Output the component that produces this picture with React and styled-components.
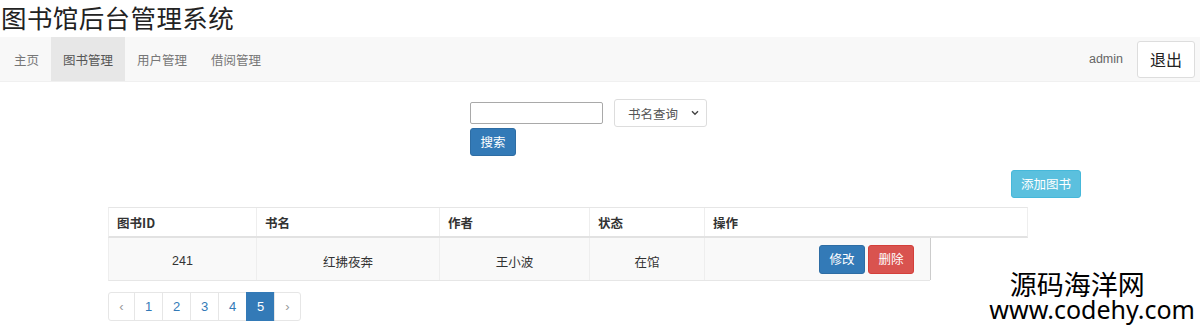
import React from "react";
import styled, { createGlobalStyle } from "styled-components";

const Global = createGlobalStyle`
  html, body { margin: 0; padding: 0; background: #fff; }
  body {
    font-family: "Liberation Sans", "Noto Sans CJK SC", sans-serif;
    color: #333;
    font-size: 13px;
    width: 1200px;
    height: 325px;
    overflow: hidden;
  }
  * { box-sizing: border-box; }
`;

const Page = styled.div`
  position: relative;
  width: 1200px;
  height: 325px;
`;

const Title = styled.h1`
  margin: 0;
  height: 37px;
  padding-left: 1px;
  font-family: "Noto Sans CJK SC", sans-serif;
  font-weight: 400;
  font-size: 25.5px;
  line-height: 34px;
  color: #222;
  letter-spacing: 0.4px;
`;

const NavBar = styled.nav`
  display: flex;
  align-items: center;
  justify-content: space-between;
  height: 45px;
  background: #f8f8f8;
  border-bottom: 1px solid #f0f0f0;
`;

const NavList = styled.div`
  display: flex;
  align-items: stretch;
  height: 100%;
  padding-left: 2px;
`;

const NavItem = styled.a`
  display: flex;
  align-items: center;
  padding: 0 12px;
  font-family: "Noto Sans CJK SC", sans-serif;
  font-size: 12.5px;
  color: ${(p) => (p.$active ? "#555" : "#777")};
  background: ${(p) => (p.$active ? "#e7e7e7" : "transparent")};
  text-decoration: none;
`;

const NavRight = styled.div`
  display: flex;
  align-items: center;
  gap: 14px;
  padding-right: 5px;
`;

const User = styled.span`
  font-size: 12.5px;
  color: #666;
`;

const LogoutButton = styled.button`
  width: 58px;
  height: 37px;
  border: 1px solid #ddd;
  border-radius: 3px;
  background: #fff;
  font-family: "Noto Sans CJK SC", sans-serif;
  font-size: 16px;
  color: #222;
  padding: 0;
`;

const SearchArea = styled.div`
  display: flex;
  flex-direction: column;
  align-items: flex-start;
  padding-left: 470px;
  margin-top: 17px;
`;

const SearchRow = styled.div`
  display: flex;
  align-items: center;
  gap: 11px;
`;

const TextInput = styled.input`
  width: 133px;
  height: 22px;
  border: 1px solid #a9a9a9;
  border-radius: 2px;
  padding: 0 4px;
`;

const SelectWrap = styled.span`
  position: relative;
  display: inline-flex;
`;

const Select = styled.select`
  appearance: none;
  width: 93px;
  height: 28px;
  border: 1px solid #ddd;
  border-radius: 3px;
  background: #fff;
  padding: 0 0 0 13px;
  font-family: "Noto Sans CJK SC", sans-serif;
  font-size: 12.5px;
  color: #555;
`;

const Chevron = styled.svg`
  position: absolute;
  right: 8px;
  top: 11px;
  pointer-events: none;
`;

const Btn = styled.button`
  height: 28px;
  padding: 0 ${(p) => p.$px || 10}px;
  border: 1px solid ${(p) => p.$border};
  border-radius: 3px;
  background: ${(p) => p.$bg};
  color: #fff;
  font-family: "Noto Sans CJK SC", sans-serif;
  font-size: 12.5px;
  line-height: 26px;
`;

const SearchButton = styled(Btn)`
  margin-top: 1px;
  width: 46px;
  padding: 0;
`;

const Toolbar = styled.div`
  display: flex;
  justify-content: flex-end;
  width: 1081px;
  margin-top: 14px;
`;

const AddButton = styled(Btn)`
  width: 70px;
  padding: 0;
`;

const TableBox = styled.div`
  margin: 9px 0 0 108px;
  width: 920px;
`;

const cols = "147px 183px 150px 115px";

const HeadRow = styled.div`
  display: grid;
  grid-template-columns: ${cols} 325px;
  height: 31px;
  border-top: 1px solid #e6e6e6;
  border-bottom: 2px solid #e2e2e2;
  border-left: 1px solid #eee;
  border-right: 1px solid #eee;
`;

const HeadCell = styled.div`
  display: flex;
  align-items: center;
  padding: 0 8px;
  font-family: "Noto Sans CJK SC", "Liberation Sans", sans-serif;
  font-weight: 700;
  font-size: 12.5px;
  color: #333;
  border-left: ${(p) => (p.$first ? "none" : "1px solid #eee")};
`;

const BodyRow = styled.div`
  display: grid;
  grid-template-columns: ${cols} 227px;
  width: 822px;
  height: 43px;
  background: #f9f9f9;
  border-bottom: 1px solid #e6e6e6;
  border-left: 1px solid #eee;
`;

const Cell = styled.div`
  display: flex;
  align-items: center;
  justify-content: ${(p) => (p.$end ? "flex-end" : "center")};
  gap: 3px;
  padding: ${(p) => (p.$end ? "0 16px 0 8px" : "4px 8px 0")};
  font-family: "Liberation Sans", "Noto Sans CJK SC", sans-serif;
  font-size: 12.5px;
  color: #333;
  border-left: ${(p) => (p.$first ? "none" : "1px solid #eee")};
  border-right: ${(p) => (p.$last ? "1px solid #ccc" : "none")};
`;

const ActionButton = styled(Btn)`
  width: 46px;
  height: 29px;
  padding: 0;
`;

const Pager = styled.ul`
  display: flex;
  list-style: none;
  margin: 11px 0 0 108px;
  padding: 0;
`;

const PageItem = styled.li`
  width: ${(p) => (p.$arrow ? 27 : 29)}px;
  height: 29px;
  display: flex;
  align-items: center;
  justify-content: center;
  margin-left: -1px;
  border: 1px solid ${(p) => (p.$active ? "#337ab7" : "#e6e6e6")};
  background: ${(p) => (p.$active ? "#337ab7" : "#fff")};
  color: ${(p) => (p.$active ? "#fff" : p.$arrow ? "#999" : "#337ab7")};
  font-family: "Liberation Sans", sans-serif;
  font-size: 13px;
  &:first-child { margin-left: 0; border-radius: 3px 0 0 3px; }
  &:last-child { border-radius: 0 3px 3px 0; }
`;

const Watermark = styled.div`
  position: absolute;
  right: 5px;
  bottom: 4px;
  display: flex;
  flex-direction: column;
  align-items: center;
  color: #000;
`;

const WmCn = styled.span`
  font-family: "Noto Sans CJK SC", sans-serif;
  font-size: 27px;
  line-height: 26px;
  margin-right: 30px;
`;

const WmUrl = styled.span`
  font-family: "Noto Sans", "Open Sans", sans-serif;
  font-size: 25px;
  line-height: 24px;
`;

export default function App() {
  return (
    <Page>
      <Global />
      <Title>图书馆后台管理系统</Title>
      <NavBar>
        <NavList>
          <NavItem>主页</NavItem>
          <NavItem $active>图书管理</NavItem>
          <NavItem>用户管理</NavItem>
          <NavItem>借阅管理</NavItem>
        </NavList>
        <NavRight>
          <User>admin</User>
          <LogoutButton>退出</LogoutButton>
        </NavRight>
      </NavBar>

      <SearchArea>
        <SearchRow>
          <TextInput type="text" />
          <SelectWrap>
            <Select defaultValue="name">
              <option value="name">书名查询</option>
              <option value="author">作者查询</option>
            </Select>
            <Chevron width="8" height="6" viewBox="0 0 8 6">
              <path d="M1 1.2 L4 4.2 L7 1.2" fill="none" stroke="#444" strokeWidth="1.4" />
            </Chevron>
          </SelectWrap>
        </SearchRow>
        <SearchButton $bg="#337ab7" $border="#2e6da4">搜索</SearchButton>
      </SearchArea>

      <Toolbar>
        <AddButton $bg="#5bc0de" $border="#46b8da">添加图书</AddButton>
      </Toolbar>

      <TableBox>
        <HeadRow>
          <HeadCell $first>图书ID</HeadCell>
          <HeadCell>书名</HeadCell>
          <HeadCell>作者</HeadCell>
          <HeadCell>状态</HeadCell>
          <HeadCell>操作</HeadCell>
        </HeadRow>
        <BodyRow>
          <Cell $first>241</Cell>
          <Cell>红拂夜奔</Cell>
          <Cell>王小波</Cell>
          <Cell>在馆</Cell>
          <Cell $end $last>
            <ActionButton $bg="#337ab7" $border="#2e6da4">修改</ActionButton>
            <ActionButton $bg="#d9534f" $border="#d43f3a">删除</ActionButton>
          </Cell>
        </BodyRow>
      </TableBox>

      <Pager>
        <PageItem $arrow>‹</PageItem>
        {[1, 2, 3, 4, 5].map((n) => (
          <PageItem key={n} $active={n === 5}>{n}</PageItem>
        ))}
        <PageItem $arrow>›</PageItem>
      </Pager>

      <Watermark>
        <WmCn>源码海洋网</WmCn>
        <WmUrl>www.codehy.com</WmUrl>
      </Watermark>
    </Page>
  );
}
